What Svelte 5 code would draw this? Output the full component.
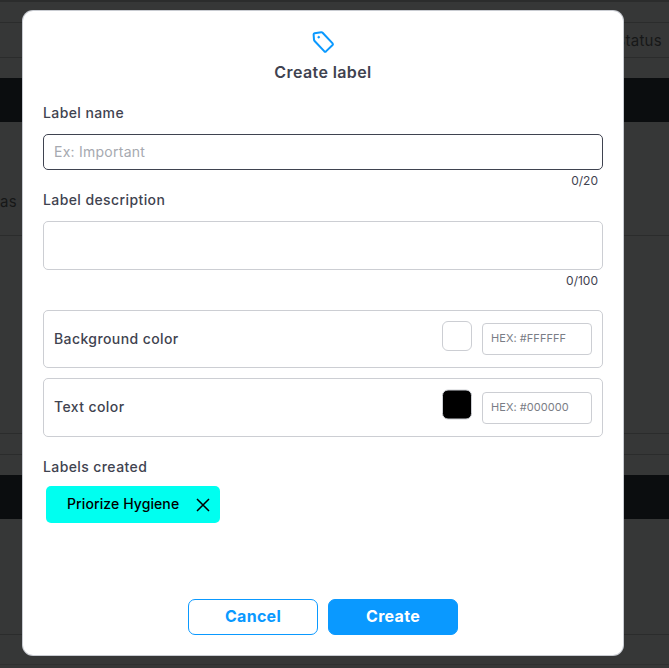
<script>
  const colors = [
    { name: 'Background color', placeholder: 'HEX: #FFFFFF', swatch: '#ffffff', cls: 'first' },
    { name: 'Text color', placeholder: 'HEX: #000000', swatch: '#000000', cls: 'second' }
  ];
</script>

<div class="page">
  <div class="bg">
    <div class="bg-row r1"></div>
    <div class="bg-row r2"><span class="status">Status</span></div>
    <div class="bg-gap"></div>
    <div class="band"></div>
    <div class="bg-row r3"><span class="as">as</span></div>
    <div class="bg-row r4"></div>
    <div class="bg-row r5"></div>
    <div class="bg-gap"></div>
    <div class="band"></div>
    <div class="bg-row r6"></div>
    <div class="bg-row r7"></div>
  </div>

  <div class="modal">
    <header class="head">
      <svg width="26" height="26" viewBox="0 0 26 26" fill="none" stroke="#0a99ff" stroke-width="2" stroke-linejoin="round">
        <path d="M4.6 4.2 L11.2 3.2 Q12 3.1 12.6 3.7 L22.6 14.4 Q23.3 15.2 22.6 16 L16 22.4 Q15.2 23.1 14.4 22.4 L4.6 12 Q4 11.4 4 10.6 L3.6 5.4 Q3.6 4.4 4.6 4.2 Z"/>
        <circle cx="8.7" cy="8.2" r="0.9" fill="#0a99ff" stroke-width="0.8"/>
      </svg>
      <h2>Create label</h2>
    </header>

    <label class="lbl name-lbl" for="n">Label name</label>
    <input id="n" class="field name" placeholder="Ex: Important" />
    <div class="count">0/20</div>

    <label class="lbl desc-lbl" for="d">Label description</label>
    <textarea id="d" class="field desc"></textarea>
    <div class="count">0/100</div>

    <div class="cards">
      {#each colors as c}
        <div class="card {c.cls}">
          <span class="card-name">{c.name}</span>
          <span class="swatch" style="background:{c.swatch}"></span>
          <input class="hex" placeholder={c.placeholder} />
        </div>
      {/each}
    </div>

    <div class="lbl created">Labels created</div>
    <div class="chip">
      <span>Priorize Hygiene</span>
      <svg width="16" height="16" viewBox="0 0 16 16" fill="none" stroke="#000" stroke-width="1.5">
        <path d="M2 2 L14 14 M14 2 L2 14"/>
      </svg>
    </div>

    <div class="actions">
      <button class="btn cancel">Cancel</button>
      <button class="btn create">Create</button>
    </div>
  </div>
</div>

<style>
  :global(body) { margin: 0; }
  .page {
    position: relative;
    width: 669px;
    height: 668px;
    overflow: hidden;
    background: #363737;
    font-family: Inter, "Noto Sans", sans-serif;
  }
  .bg { display: flex; flex-direction: column; height: 100%; }
  .bg-row { box-sizing: border-box; border-bottom: 1px solid #2b2c2c; flex: none; }
  .r1 { height: 23px; border-top: 2px solid #2b2c2c; }
  .r2 { height: 35px; display: flex; justify-content: flex-end; align-items: center; padding-right: 7px; }
  .bg-gap { height: 20px; flex: none; }
  .status { font-size: 15px; letter-spacing: 0.3px; color: #161718; }
  .band { height: 44px; background: #0b0d0f; flex: none; }
  .r3 { height: 114px; display: flex; align-items: center; padding-top: 46px; }
  .as { font-size: 15px; letter-spacing: 0.3px; color: #161718; }
  .r4 { height: 198px; }
  .r5 { height: 21px; }
  .r6 { height: 116px; }
  .r7 { height: 30px; border-bottom-color: #2f3030; }

  .modal {
    position: absolute;
    left: 23px;
    top: 11px;
    width: 600px;
    height: 644px;
    box-sizing: border-box;
    padding: 0 20px;
    background: #fff;
    border-radius: 10px;
    box-shadow: 0 0 0 1px #c9ccd2;
    color: #3f4350;
    display: flex;
    flex-direction: column;
  }
  .head { display: flex; flex-direction: column; align-items: center; padding-top: 18px; }
  h2 { margin: 6px 0 0; font-size: 16px; line-height: 22px; font-weight: 600; letter-spacing: 0.4px; color: #3f4350; }
  .lbl { font-size: 14px; line-height: 20px; font-weight: 500; letter-spacing: 0.4px; }
  .name-lbl { margin-top: 20px; }
  .field {
    display: block;
    box-sizing: border-box;
    width: 560px;
    border: 1px solid #ccced3;
    border-radius: 5px;
    background: #fff;
    outline: none;
    padding: 0 10px 2px;
    font: inherit;
    font-size: 14px;
    letter-spacing: 0.25px;
    resize: none;
    margin: 0;
  }
  .name { height: 36px; margin-top: 11px; border-color: #3f4350; }
  .name::placeholder { color: #a6a9b0; opacity: 1; }
  .desc { height: 49px; margin-top: 11px; }
  .count { font-size: 12px; line-height: 16px; text-align: right; padding-right: 5px; margin-top: 3px; color: #3f4350; }
  .desc-lbl { margin-top: 1px; }
  .cards { display: flex; flex-direction: column; gap: 10px; margin-top: 21px; }
  .card {
    box-sizing: border-box;
    border: 1px solid #ccced3;
    border-radius: 5px;
    display: flex;
    align-items: center;
    padding: 0 10px;
  }
  .first { height: 58px; }
  .second { height: 59px; }
  .card-name { flex: 1; font-size: 14px; font-weight: 500; letter-spacing: 0.4px; transform: translateY(-1px); }
  .swatch {
    box-sizing: border-box;
    width: 30px;
    height: 30px;
    border: 1px solid #ccced3;
    border-radius: 6px;
    margin-right: 10.5px;
    transform: translateY(-3px);
  }
  .second .swatch { transform: translateY(-3.5px); }
  .hex {
    box-sizing: border-box;
    width: 110px;
    height: 32px;
    border: 1px solid #ccced3;
    border-radius: 4px;
    padding: 0 8px 2px;
    font: inherit;
    font-size: 11px;
    letter-spacing: 0.05px;
    outline: none;
  }
  .hex::placeholder { color: #7a7d86; opacity: 1; }
  .created { margin-top: 20px; }
  .chip {
    box-sizing: border-box;
    width: 174px;
    height: 37px;
    margin: 9px 0 0 3px;
    background: #00fff0;
    border-radius: 5px;
    display: flex;
    align-items: center;
    justify-content: space-between;
    padding: 0 9px 0 21px;
    font-size: 14px;
    font-weight: 500;
    letter-spacing: 0.1px;
    color: #000;
  }
  .chip span { transform: translateY(-1px); }
  .actions { display: flex; justify-content: center; gap: 10px; margin-top: auto; margin-bottom: 20px; }
  .btn {
    box-sizing: border-box;
    width: 130px;
    height: 36px;
    border-radius: 7px;
    border: 1px solid #0a99ff;
    font: inherit;
    font-size: 16px;
    font-weight: 700;
    letter-spacing: 0.3px;
    padding: 0 0 2px;
  }
  .cancel { background: #fff; color: #0a99ff; }
  .create { background: #0a99ff; color: #fff; }
</style>
